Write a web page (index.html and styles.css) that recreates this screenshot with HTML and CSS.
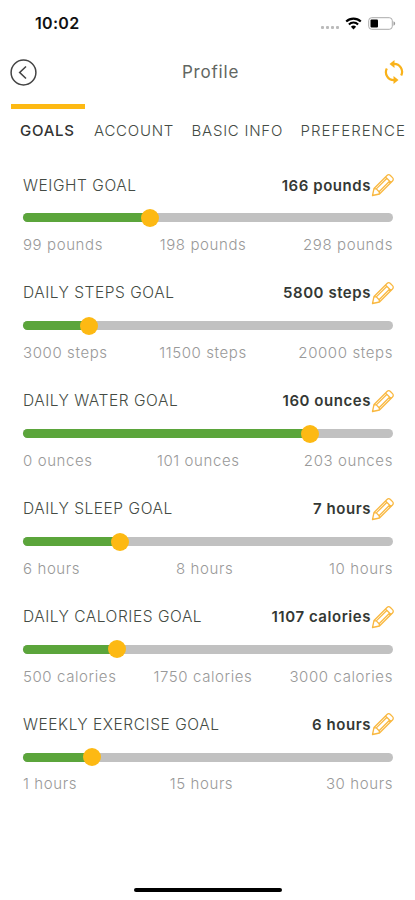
FILE: index.html
```
<!DOCTYPE html>
<html lang="en">
<head>
    <meta charset="UTF-8">
    <meta name="viewport" content="width=device-width, initial-scale=1.0">
    <title>Profile</title>
    <link rel="stylesheet" href="styles.css">
</head>
<body>
    <svg width="0" height="0" class="sprite">
        <symbol id="pencil" viewBox="0 0 24 24">
            <path d="M1.500 22.500l1.500-7L16 2.500c1-1 2.400-1 3.400 0l2.100 2.100c1 1 1 2.400 0 3.400L8.500 21zM3 15.500l2.300.4 2.800 2.800.4 2.300M5.300 15.900L16.200 5M8.100 18.700L19 7.800M14.500 4l5.500 5.500" fill="none" stroke="currentColor" stroke-width="1.300" stroke-linejoin="round"/>
        </symbol>
    </svg>

    <div class="status-bar">
        <span class="time">10:02</span>
        <div class="status-icons">
            <div class="dots"><i></i><i></i><i></i><i></i></div>
            <svg class="wifi" width="17" height="13" viewBox="0 0 17 13">
                <path d="M1.200 4.600a10.500 10.500 0 0 1 14.600 0M3.900 7.400a6.500 6.500 0 0 1 9.200 0" fill="none" stroke="#000" stroke-width="2.100"/>
                <path d="M5.900 9.800a3.700 3.700 0 0 1 5.200 0L8.500 12.500z"/>
            </svg>
            <svg width="28" height="13" viewBox="0 0 28 13">
                <rect x=".7" y=".7" width="23.600" height="11.600" rx="3" fill="#fff" stroke="#aaa" stroke-width="1"/>
                <rect x="2.500" y="2.500" width="7.500" height="8" rx="1"/>
                <path d="M25.500 4.300c2.200.8 2.200 3.600 0 4.400z" fill="#999"/>
            </svg>
        </div>
    </div>

    <header class="header">
        <svg width="27" height="27" viewBox="0 0 27 27" fill="none" stroke="#444">
            <circle cx="13.500" cy="13.500" r="12.400" stroke-width="1.500"/>
            <path d="M16 7.500L9.700 13.500l6.300 6" stroke-width="1.600"/>
        </svg>
        <h1>Profile</h1>
        <svg width="20" height="24" viewBox="0 0 20 24">
            <path d="M9 3.900h1a8 8 0 0 1 7.200 11.600M11 20.100h-1A8 8 0 0 1 2.800 8.500" fill="none" stroke="#f9b21a" stroke-width="2.200"/>
            <path d="M10.500 0v8L5.500 4zM9.500 16v8l5-4z" fill="#f9b21a"/>
        </svg>
    </header>

    <nav class="tabs">
        <a class="tab active">GOALS</a>
        <a class="tab">ACCOUNT</a>
        <a class="tab">BASIC INFO</a>
        <a class="tab last">PREFERENCE</a>
    </nav>

    <main class="goals">
        <section class="goal">
            <div class="goal-head"><h2>WEIGHT GOAL</h2><strong>166 pounds</strong><svg class="edit"><use href="#pencil"/></svg></div>
            <div class="track"><div class="fill" style="width: 34.4%"></div></div>
            <div class="range"><span>99 pounds</span><span>198 pounds</span><span>298 pounds</span></div>
        </section>
        <section class="goal">
            <div class="goal-head"><h2>DAILY STEPS GOAL</h2><strong>5800 steps</strong><svg class="edit"><use href="#pencil"/></svg></div>
            <div class="track"><div class="fill" style="width: 17.9%"></div></div>
            <div class="range"><span>3000 steps</span><span>11500 steps</span><span>20000 steps</span></div>
        </section>
        <section class="goal">
            <div class="goal-head"><h2>DAILY WATER GOAL</h2><strong>160 ounces</strong><svg class="edit"><use href="#pencil"/></svg></div>
            <div class="track"><div class="fill" style="width: 77.6%"></div></div>
            <div class="range"><span>0 ounces</span><span>101 ounces</span><span>203 ounces</span></div>
        </section>
        <section class="goal">
            <div class="goal-head"><h2>DAILY SLEEP GOAL</h2><strong>7 hours</strong><svg class="edit"><use href="#pencil"/></svg></div>
            <div class="track"><div class="fill" style="width: 26.1%"></div></div>
            <div class="range"><span>6 hours</span><span>8 hours</span><span>10 hours</span></div>
        </section>
        <section class="goal">
            <div class="goal-head"><h2>DAILY CALORIES GOAL</h2><strong>1107 calories</strong><svg class="edit"><use href="#pencil"/></svg></div>
            <div class="track"><div class="fill" style="width: 25.4%"></div></div>
            <div class="range"><span>500 calories</span><span>1750 calories</span><span>3000 calories</span></div>
        </section>
        <section class="goal">
            <div class="goal-head"><h2>WEEKLY EXERCISE GOAL</h2><strong>6 hours</strong><svg class="edit"><use href="#pencil"/></svg></div>
            <div class="track"><div class="fill" style="width: 18.6%"></div></div>
            <div class="range"><span>1 hours</span><span>15 hours</span><span>30 hours</span></div>
        </section>
    </main>

    <div class="home-bar"></div>
</body>
</html>
```
FILE: styles.css
```
* {
    box-sizing: border-box;
}
body {
    font-family: Inter, "Open Sans", sans-serif;
    margin: 0;
    height: 900px;
    background-color: #fff;
    color: #444b44;
    overflow: hidden;
    display: flex;
    flex-direction: column;
}
.sprite {
    position: absolute;
}
svg {
    display: block;
    flex: none;
}
.status-bar {
    display: flex;
    align-items: center;
    justify-content: space-between;
    height: 46px;
    padding: 0 19px 0 35px;
}
.time {
    font-size: 16px;
    font-weight: 600;
    letter-spacing: .3px;
    color: #111;
}
.status-icons {
    display: flex;
    align-items: center;
}
.dots {
    display: flex;
    gap: 2px;
    margin: 8px 6px 0 0;
}
.dots i {
    width: 3px;
    height: 3px;
    border-radius: 1px;
    background: #bbb;
}
.wifi {
    margin-right: 6px;
}
.header {
    display: flex;
    align-items: center;
    justify-content: space-between;
    height: 52px;
    padding: 0 11px 0 10px;
}
h1 {
    margin: 0;
    font-size: 17px;
    font-weight: 400;
    letter-spacing: .8px;
    color: #626762;
}
.tabs {
    display: flex;
    height: 53px;
    margin: 6px 10px 0 11px;
    overflow: hidden;
}
.tab {
    flex: none;
    padding: 12px 8.5px 0 9px;
    border-top: 5px solid transparent;
    font-size: 15px;
    line-height: 20px;
    font-weight: 300;
    letter-spacing: .75px;
    white-space: nowrap;
}
.tab.active {
    width: 74px;
    padding-right: 0;
    border-color: #fdb913;
    font-weight: 500;
    color: #333;
}
.tab.last {
    padding-right: 0;
    letter-spacing: 1px;
}
.goals {
    padding: 16px 22px 0 23px;
}
.goal {
    height: 107.9px;
}
.goal-head {
    display: flex;
    align-items: center;
    height: 24px;
}
h2 {
    flex: 1;
    margin: 0;
    font-size: 15.5px;
    font-weight: 300;
    letter-spacing: .55px;
}
strong {
    font-size: 15px;
    font-weight: 600;
    letter-spacing: .55px;
    color: #343834;
}
.edit {
    width: 24px;
    height: 24px;
    margin-right: -2px;
    color: #f9b840;
}
.track {
    height: 9px;
    margin-top: 16.400px;
    border-radius: 5px;
    background: #c1c1c1;
}
.fill {
    position: relative;
    height: 9px;
    border-radius: 5px;
    background: #5ba53b;
}
/* slider thumb */
.fill::after {
    content: "";
    position: absolute;
    right: -9px;
    top: -4.5px;
    width: 18px;
    height: 18px;
    border-radius: 50%;
    background: #fdb913;
}
.range {
    display: flex;
    justify-content: space-between;
    margin-top: 11.600px;
    font-size: 15px;
    line-height: 22px;
    font-weight: 300;
    letter-spacing: .6px;
    color: #999;
}
.home-bar {
    width: 148px;
    height: 4px;
    margin: auto auto 8px 134px;
    border-radius: 2px;
    background: #000;
}
```
